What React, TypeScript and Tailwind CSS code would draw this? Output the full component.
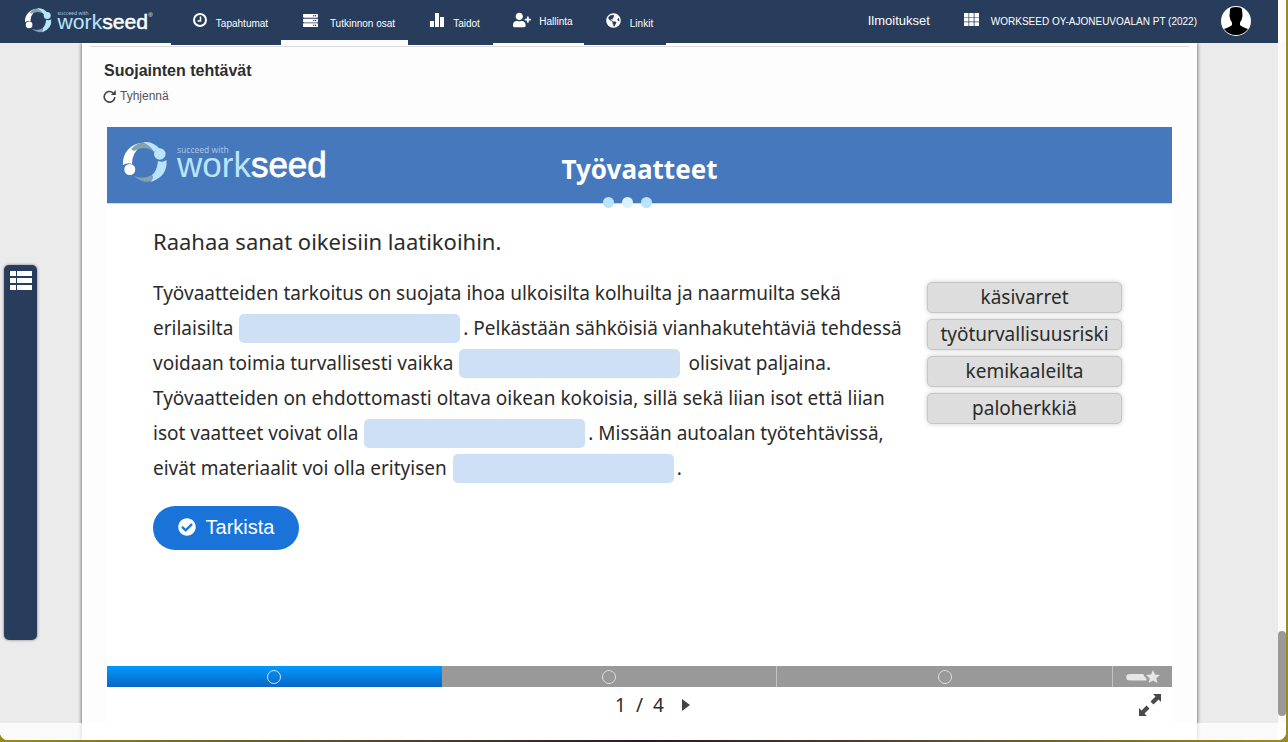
import React, { type ReactNode } from "react";
import {
  FaCheckCircle,
  FaGlobeAmericas,
  FaServer,
  FaUserPlus,
} from "react-icons/fa";

function Logo({ className, registered }: { className: string; registered?: boolean }) {
  return (
    <svg viewBox="0 0 212 42" className={className} role="img" aria-label="Succeed with Workseed">
      <path d="M17 1 C7 3 0 11 0 21 L0 23 Q5 20 9 22 Q9 11 17 5 Z" fill="#fff" />
      <path d="M8 7 Q13 1 22 0 L35 6 L31 9 Q20 3 11 9 Z" fill="#84a0b3" />
      <path d="M20 0 Q30 -1 37 7 Q33 7 31 10 Q28 4 20 0 Z" fill="#b9e5fc" />
      <path d="M11 34 Q20 38 29 33 L30 39 Q20 42 11 34 Z" fill="#84a0b3" />
      <path d="M43.500 18 Q45 34 28 40 Q31 35 29 33 Q34 29 35 19 Q40 21 43.500 18 Z" fill="#b9e5fc" />
      <circle cx="36.800" cy="12" r="5.800" fill="#b9e5fc" />
      <circle cx="6.800" cy="27.500" r="5.500" fill="#fff" />
      <text x="54" y="11" fontFamily="Noto Sans, sans-serif" fontSize="8.500" fill="#a9c3df">
        succeed with
      </text>
      <text x="54" y="35" fontFamily="Liberation Sans, sans-serif" fontSize="35" fill="#b9e5fc">
        work
        <tspan fill="#fff" stroke="#fff" strokeWidth="0.800">seed</tspan>
      </text>
      {registered && (
        <text x="204" y="14" fontFamily="Liberation Sans, sans-serif" fontSize="10" fill="#fff">
          ®
        </text>
      )}
    </svg>
  );
}

const navItems: { label: string; icon: ReactNode; box: string; text: string }[] = [
  { label: "Tapahtumat", icon: <ClockIcon />, box: "w-[110px] h-[45px] gap-[9px]", text: "pt-2" },
  { label: "Tutkinnon osat", icon: <FaServer size={15} />, box: "w-[127px] h-[40px] gap-3", text: "pt-2" },
  { label: "Taidot", icon: <BarsIcon />, box: "w-[85px] h-[45px] gap-[9px]", text: "pt-2" },
  { label: "Hallinta", icon: <FaUserPlus size={18} />, box: "w-[91px] h-[43px] gap-2", text: "pt-1" },
  { label: "Linkit", icon: <FaGlobeAmericas size={15} />, box: "w-[82px] h-[45px] gap-[9px]", text: "pt-2" },
];

function ClockIcon() {
  return (
    <svg width="14" height="14" viewBox="0 0 14 14" fill="none" stroke="currentColor" strokeWidth="2" aria-hidden="true">
      <circle cx="7" cy="7" r="6" />
      <path d="M7.500 3.500V8H4.500" strokeWidth="1.500" />
    </svg>
  );
}

function BarsIcon() {
  return (
    <svg width="14" height="14" viewBox="0 0 14 14" fill="currentColor" aria-hidden="true">
      <path d="M0 8h4v6H0zM5 0h4v14H5zM10 4h4v10h-4z" />
    </svg>
  );
}

function Header() {
  return (
    <header className="relative z-10 mr-2 flex h-[43px] shrink-0 items-start bg-[#283d5c] text-white">
      <a href="#" className="mt-2 ml-[25px] w-[146px] shrink-0">
        <Logo className="h-[26px] w-[128px]" registered />
      </a>
      <nav className="flex items-start bg-[#fdfdfd]">
        {navItems.map((item) => (
          <a
            key={item.label}
            href="#"
            className={`flex shrink-0 items-start justify-center bg-[#283d5c] pl-[9px] text-[10px] leading-4 whitespace-nowrap ${item.box}`}
          >
            <span className="flex h-10 items-center">{item.icon}</span>
            <span className={`flex h-10 items-center ${item.text}`}>{item.label}</span>
          </a>
        ))}
      </nav>
      <div className="ml-auto flex h-[42px] items-center pr-[27px] whitespace-nowrap">
        <a href="#" className="text-[13px]">Ilmoitukset</a>
        <button type="button" className="ml-[34px] flex items-center gap-3 text-[10px]">
          <span className="pb-1">
            <GridIcon />
          </span>
          WORKSEED OY-AJONEUVOALAN PT (2022)
        </button>
        <button type="button" aria-label="Profiili" className="ml-6">
          <svg width="30" height="30" viewBox="0 0 30 30" aria-hidden="true">
            <circle cx="15" cy="15" r="15" fill="#fff" />
            <path
              d="M9 3Q10 1 15 1Q20 1 21 3L21.500 10Q21 14 19 16.500L19 19Q21 21 27 23A15 15 0 0 1 3 23Q9 21 11 19L11 16.500Q9 14 8.500 10Z"
              fill="#000"
            />
          </svg>
        </button>
      </div>
    </header>
  );
}

function GridIcon() {
  return (
    <svg width="15" height="13" viewBox="0 0 15 13" fill="currentColor" aria-hidden="true">
      <path d="M0 0h4.500v4H0zM5.200 0h4.500v4H5.200zM10.500 0h4.500v4H10.500zM0 4.600h4.500v4H0zM5.200 4.600h4.500v4H5.200zM10.500 4.600h4.500v4H10.500zM0 9.200h4.500v4H0zM5.200 9.200h4.500v4H5.200zM10.500 9.200h4.500v4H10.500z" />
    </svg>
  );
}

function Blank() {
  return (
    <span className="inline-block pr-[3px] pb-[2px] pl-px align-middle leading-none">
      <span
        role="textbox"
        aria-label="Pudota sana"
        className="inline-block h-[29px] w-[221px] rounded-[5px] bg-[#cde0f5] align-top"
      />
    </span>
  );
}

const words = ["käsivarret", "työturvallisuusriski", "kemikaaleilta", "paloherkkiä"];

function Exercise() {
  return (
    <section className="mx-[25px] mt-[22px] flex flex-1 flex-col bg-white font-['Noto_Sans',sans-serif] text-[#2b2b2b]">
      <div className="relative flex h-[77px] shrink-0 items-center justify-center border-b border-[#bcdcfa] bg-[#4678bd]">
        <div className="absolute top-[15px] left-4">
          <Logo className="h-[42px] w-[212px]" />
        </div>
        <h2 className="pt-2 text-[26px] leading-9 font-bold text-white">Työvaatteet</h2>
        <div className="absolute inset-x-0 -bottom-[5px] flex justify-center gap-2 pr-6">
          <span className="size-[11px] rounded-full bg-[#b9e4fd]" />
          <span className="size-[11px] rounded-full bg-[#dcf1fe]" />
          <span className="size-[11px] rounded-full bg-[#b9e4fd]" />
        </div>
      </div>

      <div className="flex-1 px-[46px] pt-5">
        <p className="text-[22px] leading-[34px]">Raahaa sanat oikeisiin laatikoihin.</p>
        <div className="mt-[18px] flex items-start justify-between pr-1">
          <p className="text-[19px] leading-[35px] whitespace-nowrap">
            Työvaatteiden tarkoitus on suojata ihoa ulkoisilta kolhuilta ja naarmuilta sekä
            <br />
            erilaisilta <Blank />. Pelkästään sähköisiä vianhakutehtäviä tehdessä
            <br />
            voidaan toimia turvallisesti vaikka <Blank /> olisivat paljaina.
            <br />
            Työvaatteiden on ehdottomasti oltava oikean kokoisia, sillä sekä liian isot että liian
            <br />
            isot vaatteet voivat olla <Blank />. Missään autoalan työtehtävissä,
            <br />
            eivät materiaalit voi olla erityisen <Blank />.
          </p>
          <div className="mt-[6px] flex w-[195px] shrink-0 flex-col gap-[6px] text-[19px]">
            {words.map((word) => (
              <button
                key={word}
                type="button"
                className="h-[31px] rounded-[5px] border border-[#c5c5c5] bg-[#dddddd] leading-[29px] whitespace-nowrap shadow-[0_0_5px_rgba(0,0,0,0.2)]"
              >
                {word}
              </button>
            ))}
          </div>
        </div>
        <button
          type="button"
          className="mt-5 flex h-11 w-[146px] items-center justify-center gap-[10px] rounded-full bg-[#1a73d9] pb-[2px] font-['Liberation_Sans',sans-serif] text-xl text-white"
        >
          <FaCheckCircle size={18} />
          Tarkista
        </button>
      </div>

      <div className="flex h-[21px] shrink-0 bg-[#999999]">
        <a href="#" aria-label="Sivu 1" className="flex flex-1 items-center justify-center bg-linear-to-b from-[#0099ff] to-[#0a66c4]">
          <Dot />
        </a>
        <a href="#" aria-label="Sivu 2" className="flex flex-1 items-center justify-center border-r border-[#c4c4c4]">
          <Dot />
        </a>
        <a href="#" aria-label="Sivu 3" className="flex flex-1 items-center justify-center border-r border-[#c4c4c4]">
          <Dot />
        </a>
        <a href="#" aria-label="Yhteenveto" className="flex w-[59px] items-center justify-center">
          <svg width="34" height="14" viewBox="0 0 34 14" fill="#e6e6e6" aria-hidden="true">
            <path d="M3.500 4H17Q18 4 18 6L20.500 8.500V10.500H3.500A3.250 3.250 0 0 1 3.500 4Z" />
            <path d="M27 0L29 4.500L34 5L30.300 8.300L31.300 13L27 10.600L22.700 13L23.700 8.300L20 5L25 4.500Z" />
          </svg>
        </a>
      </div>
      <div className="relative flex h-[53px] shrink-0 items-start justify-center">
        <div className="flex items-center gap-[10px] pt-[3px] pl-[26px] text-[19px] leading-[30px]">
          <span>1</span>
          <span>/</span>
          <span>4</span>
          <button type="button" aria-label="Seuraava sivu" className="ml-2">
            <svg width="8" height="12" viewBox="0 0 8 12" fill="#444" aria-hidden="true">
              <path d="M0 0L8 6L0 12Z" />
            </svg>
          </button>
        </div>
        <button type="button" aria-label="Koko näyttö" className="absolute top-[7px] right-[11px]">
          <svg width="22" height="22" viewBox="0 0 22 22" fill="#4a4a4a" aria-hidden="true">
            <path d="M14 0H22V8L19.500 5.500L14.500 10.500L11.500 7.500L16.500 2.500Z" />
            <path d="M8 22H0V14L2.500 16.500L7.500 11.500L10.500 14.500L5.500 19.500Z" />
          </svg>
        </button>
      </div>
    </section>
  );
}

function Dot() {
  return <span className="size-[14px] rounded-full border border-[#dddddd]" />;
}

export default function App() {
  return (
    <div className="h-screen bg-linear-to-r from-[#9a8a16] via-[#2a1a24] to-[#a08a1c] pr-[2px] pb-[2px] font-['Liberation_Sans',sans-serif]">
      <div className="relative flex h-full flex-col overflow-hidden rounded-b-lg bg-[#fdfdfd]">
        <Header />
        <div className="flex min-h-0 flex-1">
          <aside className="flex w-[82px] shrink-0 items-start bg-[#ebebeb] pt-[222px] pl-1">
            <button
              type="button"
              aria-label="Sisällysluettelo"
              className="flex h-[375px] w-[33px] justify-center rounded-[5px] bg-[#283d5c] pt-[5px] text-white shadow-[0_0_3px_rgba(0,0,0,0.5)]"
            >
              <ListIcon />
            </button>
          </aside>
          <main className="relative flex min-w-0 flex-1 flex-col bg-[#fdfdfd] shadow-[0_0_4px_rgba(0,0,0,0.7)]">
            <hr className="mx-2 mt-[3px] border-[#dcdcdc]" />
            <h1 className="mt-3 ml-[22px] text-base leading-6 font-bold text-[#2d2d2d]">Suojainten tehtävät</h1>
            <button type="button" className="mt-1 ml-[21px] flex items-center gap-1 self-start text-xs leading-[18px] text-[#555555]">
              <svg width="13" height="13" viewBox="0 0 13 13" aria-hidden="true">
                <path d="M11.800 7A5.300 5.300 0 1 1 10 2.800" fill="none" stroke="#444" strokeWidth="1.600" />
                <path d="M12.800 0V5H7.800Z" fill="#444" />
              </svg>
              Tyhjennä
            </button>
            <Exercise />
          </main>
          <div className="w-[81px] shrink-0 bg-[#ebebeb]" />
          <div className="flex w-2 shrink-0 flex-col justify-end bg-[#fafafa] pb-6">
            <div className="h-[85px] rounded-full bg-[#999999]" />
          </div>
        </div>
        <div className="pointer-events-none absolute inset-x-0 bottom-0 h-[17px] bg-white/75" />
      </div>
    </div>
  );
}

function ListIcon() {
  return (
    <svg width="22" height="21" viewBox="0 0 22 21" fill="currentColor" aria-hidden="true">
      <path d="M0 1h6v5H0zM7 1h15v5H7zM0 8h6v5H0zM7 8h15v5H7zM0 15h6v5H0zM7 15h15v5H7z" />
    </svg>
  );
}
